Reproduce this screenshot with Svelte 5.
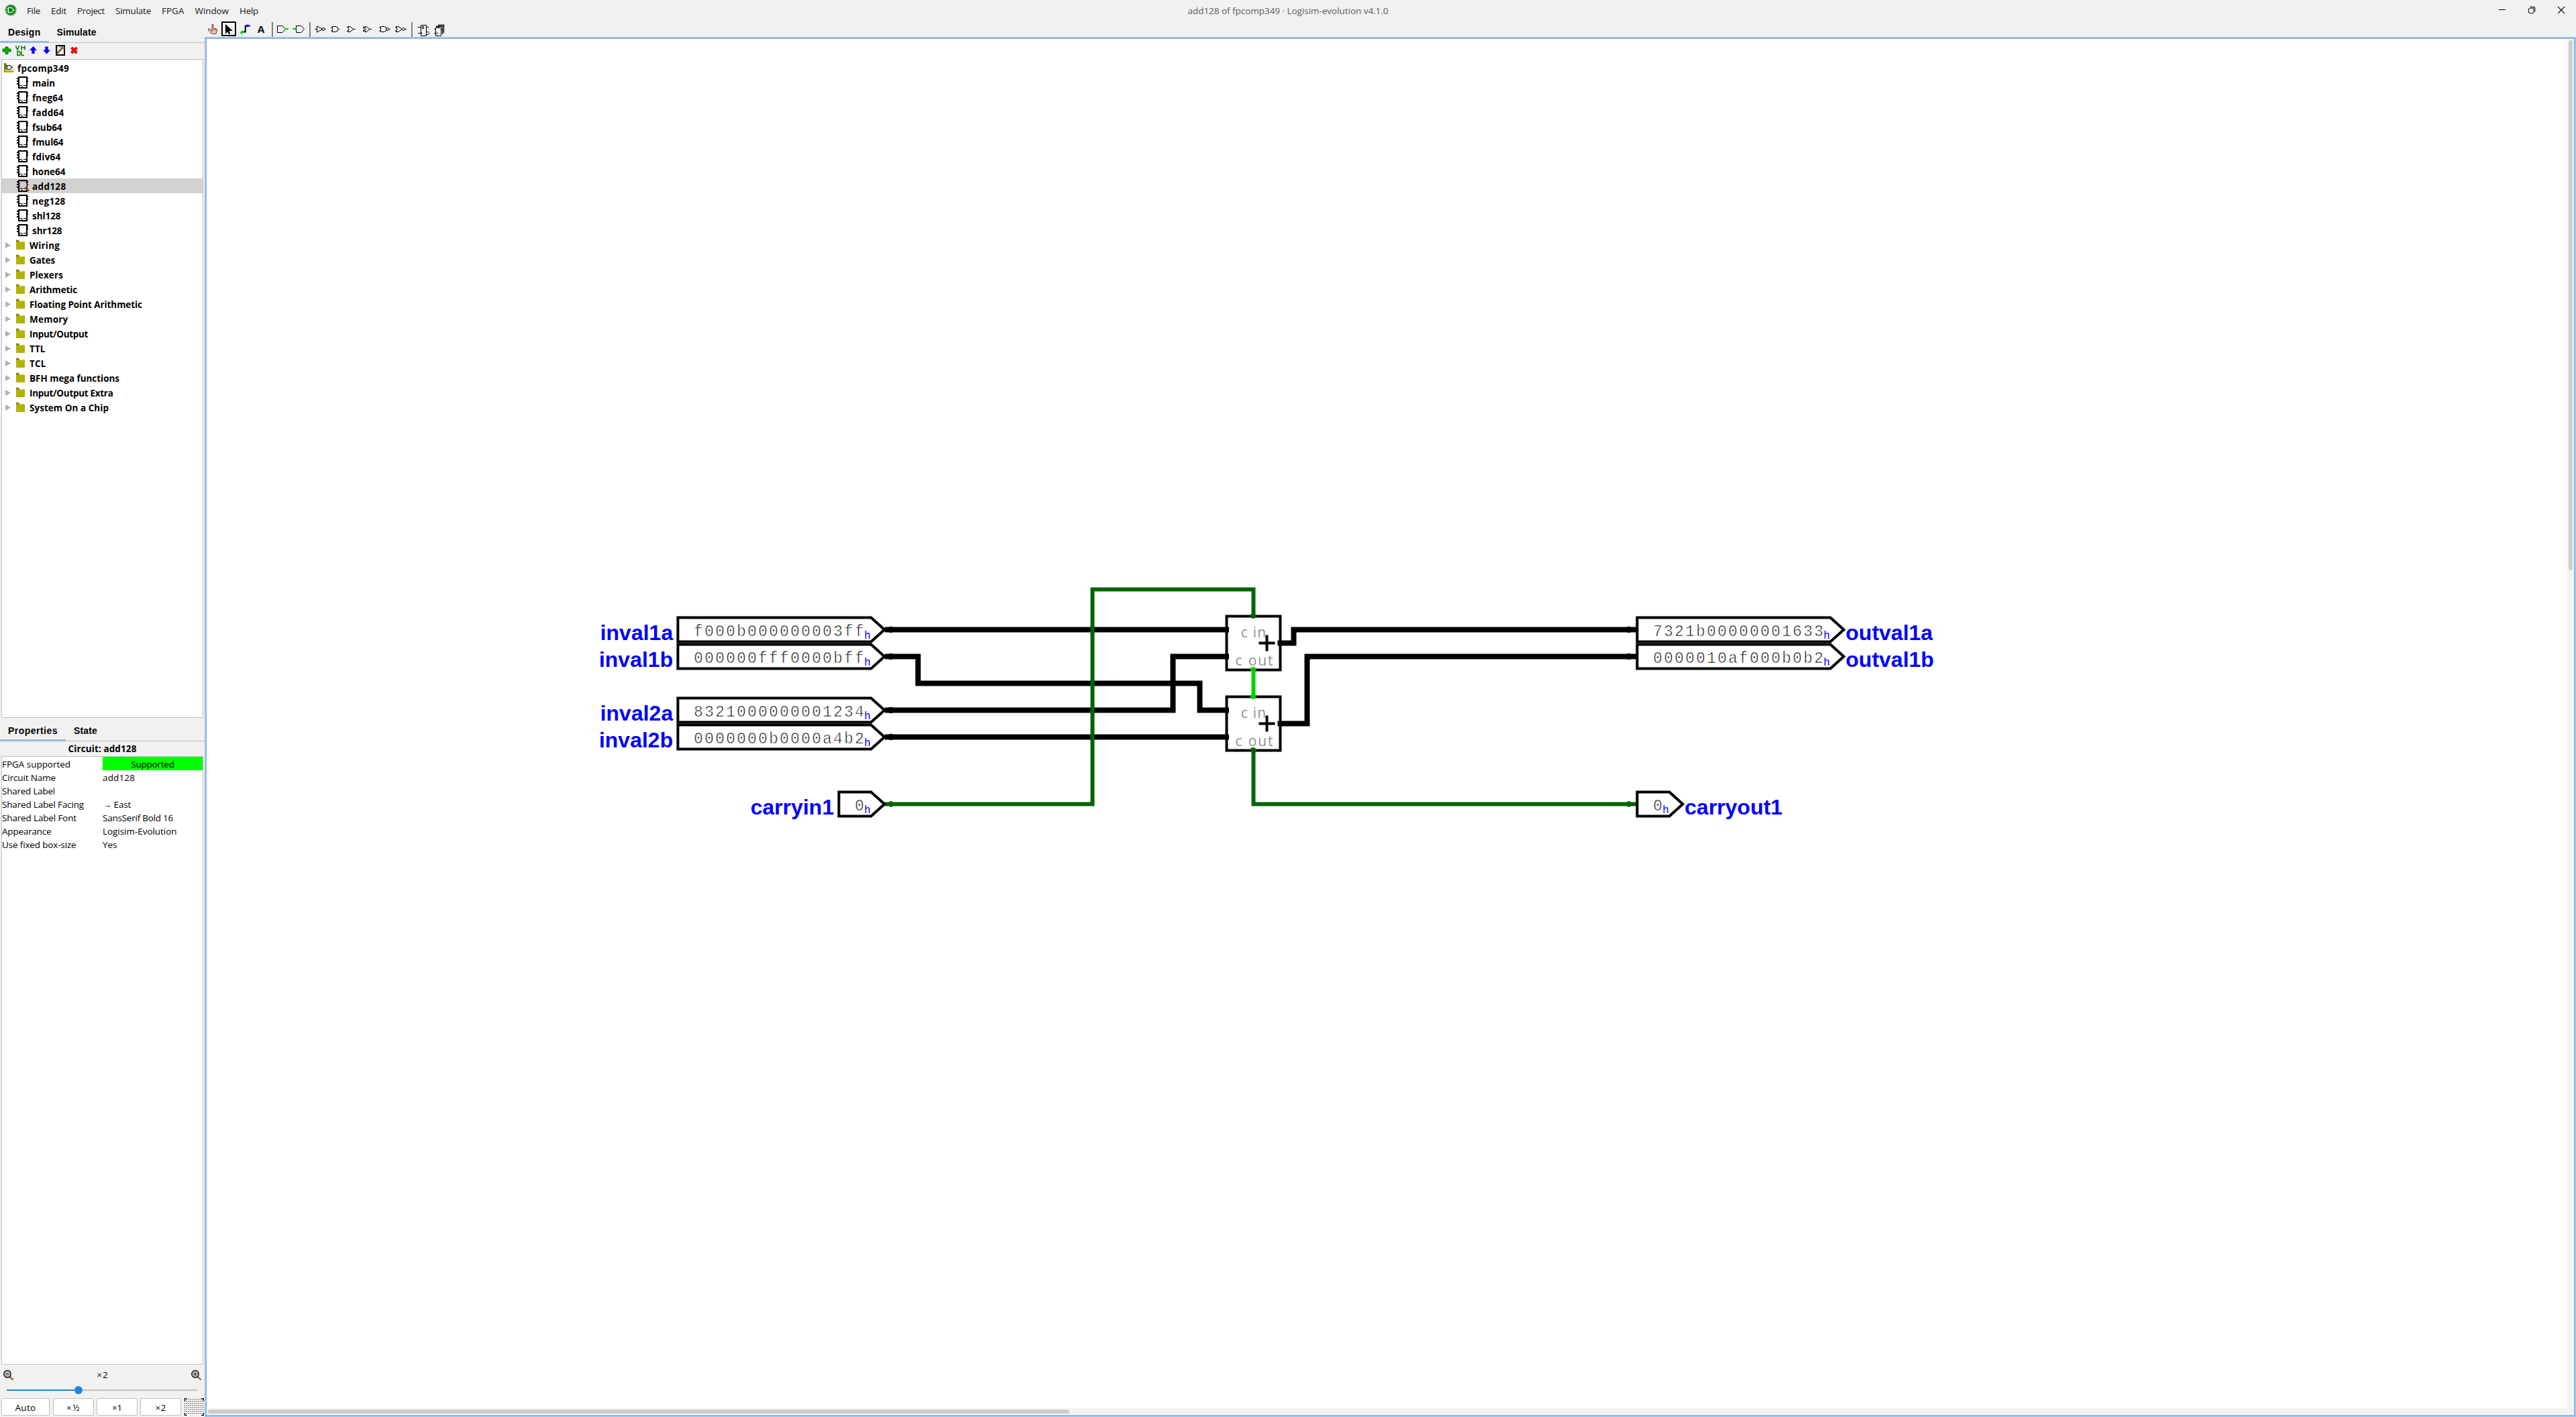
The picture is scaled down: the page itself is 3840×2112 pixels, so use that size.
<script>
  // Spreads a text run over a given width by adjusting its tracking.
  function fit(node, width) {
    const natural = node.getBoundingClientRect().width;
    const count = node.textContent.length;
    if (count > 1) node.style.letterSpacing = `${(width - natural) / count}px`;
  }

  const menus = [['File', 20], ['Edit', 23], ['Project', 41], ['Simulate', 53], ['FPGA', 33.5], ['Window', 50.5], ['Help', 28]];

  const circuits = [
    ['main', 34], ['fneg64', 46], ['fadd64', 47.5], ['fsub64', 44.5], ['fmul64', 46.5], ['fdiv64', 42.5],
    ['hone64', 49.5], ['add128', 50.5], ['neg128', 49.5], ['shl128', 42.5], ['shr128', 44.5]
  ];

  const libraries = [
    ['Wiring', 45], ['Gates', 38], ['Plexers', 50], ['Arithmetic', 71], ['Floating Point Arithmetic', 168],
    ['Memory', 57.5], ['Input/Output', 87], ['TTL', 23.5], ['TCL', 24.5], ['BFH mega functions', 134],
    ['Input/Output Extra', 124.5], ['System On a Chip', 118]
  ];

  const properties = [
    ['FPGA supported', 102, 'Supported', 64.5],
    ['Circuit Name', 80, 'add128', 48],
    ['Shared Label', 79, '', 0],
    ['Shared Label Facing', 122, '→ East', 42],
    ['Shared Label Font', 111, 'SansSerif Bold 16', 105],
    ['Appearance', 73.5, 'Logisim-Evolution', 110.5],
    ['Use fixed box-size', 110.5, 'Yes', 21.5]
  ];

  const pins = [
    { label: 'inval1a', value: 'f000b000000003ff', x: 1010.5, y: 938.5, input: true },
    { label: 'inval1b', value: '000000fff0000bff', x: 1010.5, y: 978.5, input: true },
    { label: 'inval2a', value: '8321000000001234', x: 1010.5, y: 1058.5, input: true },
    { label: 'inval2b', value: '0000000b0000a4b2', x: 1010.5, y: 1098.5, input: true },
    { label: 'carryin1', value: '0', x: 1250.5, y: 1198.5, input: true },
    { label: 'outval1a', value: '7321b00000001633', x: 2440.5, y: 938.5, input: false },
    { label: 'outval1b', value: '0000010af000b0b2', x: 2440.5, y: 978.5, input: false },
    { label: 'carryout1', value: '0', x: 2440.5, y: 1198.5, input: false }
  ];
  const bodyWidth = (pin) => 48 + (pin.value.length - 1) * 16;

  const adders = [918.5, 1038.5];
</script>

{#snippet chip(active)}
  <svg class="chip" width="20" height="20" viewBox="0 0 20 20">
    <path d="M4 3h12v16H4z" fill={active ? '#f4f4f4' : '#fff'} stroke="#000" stroke-width="2" />
    <path d="M1 5h3M1 9h3M1 13h3M16 5h2M16 9h2" stroke="#000" stroke-width="2" />
    <path d="M5 15.5h4M11 15.5h4M8 18l2-2" stroke="#000" stroke-width="1" fill="none" />
    {#if active}
      <circle cx="10.5" cy="9.5" r="5.5" fill="#cdcde0" stroke="#9a5a3c" />
      <path d="M14 13.5l5 5" stroke="#8b4513" stroke-width="2.4" />
    {/if}
  </svg>
{/snippet}

{#snippet magnifier(plus)}
  <svg width="16" height="16" viewBox="0 0 16 16">
    <path d="M9.5 10l5 4.500" stroke="#8b4513" stroke-width="2" />
    <circle cx="6" cy="6" r="5.3" fill="#b4b4b4" stroke="#000" stroke-width="1.2" />
    <path d={plus ? 'M3.5 6h5M6 3.5v5' : 'M3.5 6h5'} stroke="#333" />
  </svg>
{/snippet}

<div class="window">
  <header class="titlebar">
    <div class="menubar">
      <svg class="logo" width="18" height="18" viewBox="0 0 18 18">
        <circle cx="9" cy="9" r="8" fill="#0a8a0a" stroke="#8fa88f" stroke-width="1.4" />
        <path d="M5.5 5.3h3.4a3.7 3.7 0 0 1 0 7.4H5.5z" fill="none" stroke="#e6f2e6" stroke-width="1.3" />
        <path d="M2.5 7.3h3M2.5 10.7h3M12.6 9h3" stroke="#e6f2e6" stroke-width="1.1" />
      </svg>
      {#each menus as [name, width]}
        <span class="menu"><span use:fit={width}>{name}</span></span>
      {/each}
    </div>
    <div class="title"><span use:fit={299}>add128 of fpcomp349 · Logisim-evolution v4.1.0</span></div>
    <div class="controls">
      <svg width="12" height="12" viewBox="0 0 12 12"><path d="M1 5.5h10" stroke="#000" /></svg>
      <svg width="12" height="12" viewBox="0 0 12 12" fill="none" stroke="#111" stroke-width="1.1">
        <rect x="1.5" y="3.3" width="7.4" height="7.4" rx="1.6" />
        <path d="M3.6 1.4h4.6a2.6 2.6 0 0 1 2.6 2.6v4.5" />
      </svg>
      <svg width="12" height="12" viewBox="0 0 12 12"><path d="M1 1l10 10M11 1L1 11" stroke="#111" stroke-width="1.1" /></svg>
    </div>
  </header>

  <div class="workspace">
    <aside class="sidebar">
      <nav class="tabs top">
        <span class="tab active"><span use:fit={48.5}>Design</span></span>
        <span class="tab"><span use:fit={59}>Simulate</span></span>
      </nav>

      <div class="actions">
        <svg width="20" height="24" viewBox="0 64 20 24">
          <path d="M8 70h4v3h4v4h-4v3.500h-4v-3.500h-4v-4h4z" fill="#00b000" stroke="#007800" />
        </svg>
        <svg width="20" height="24" viewBox="20 64 20 24" fill="none" stroke="#008000" stroke-width="1.5">
          <path d="M24 68v2l2 4 2-4v-2M32 68v6.500M37 68v6.500M32 71h5M26 76.500v6h2.500l1.500-1.500v-3l-1.500-1.500zM32 76v6.500h4" />
        </svg>
        <svg width="20" height="24" viewBox="40 64 20 24">
          <path d="M49.500 69l5.500 6h-3.300v5h-4.400v-5H44z" fill="#00f" />
        </svg>
        <svg width="20" height="24" viewBox="60 64 20 24">
          <path d="M69.500 80.500l5.500-6h-3.300v-5h-4.400v5H64z" fill="#00f" />
        </svg>
        <svg width="20" height="24" viewBox="80 64 20 24">
          <rect x="84" y="68" width="12" height="14" fill="#f4f4f4" stroke="#000" stroke-width="2" />
          <path d="M85.500 71v9" stroke="#0b0" stroke-dasharray="1 2" />
          <path d="M95.500 71v9" stroke="#22f" stroke-dasharray="1 2" />
          <path d="M84 81l9-10" stroke="#8b4513" stroke-width="2.500" />
          <path d="M88 69.500l6.500.5v4" fill="none" stroke="#888" stroke-width="2" />
        </svg>
        <svg width="20" height="24" viewBox="100 64 20 24">
          <path d="M106.500 71l8 8M114.500 71l-8 8" stroke="#c00000" stroke-width="4" />
          <path d="M106.500 71l8 8M114.500 71l-8 8" stroke="#ff1414" stroke-width="2.200" />
        </svg>
      </div>

      <div class="tree">
        <div class="row root">
          <svg width="16" height="16" viewBox="0 0 16 16">
            <path d="M0 0h3l1 2v12H0z" fill="#808000" />
            <path d="M4 2h9v10H2z" fill="#f6f6f0" />
            <path d="M13.500 3v8" stroke="#c4c4a0" />
            <path d="M4.500 3.500h3.500a3 3 0 0 1 0 6H4.500zM2 5h2M2 8h2M11 6.500h2" fill="#fff" stroke="#000" />
            <path d="M1 14l1.500-3H15l-1 3z" fill="#b2b200" />
          </svg>
          <span use:fit={77}>fpcomp349</span>
        </div>
        {#each circuits as [name, width]}
          <div class="row circuit" class:selected={name === 'add128'}>
            {@render chip(name === 'add128')}
            <span use:fit={width}>{name}</span>
          </div>
        {/each}
        {#each libraries as [name, width]}
          <div class="row library">
            <svg width="29" height="16" viewBox="8 0 29 16">
              <path d="M8 4v9l8-4.500z" fill="#b0b0b0" />
              <path d="M24 .7h4l1 2v3h-5z" fill="#808000" />
              <path d="M24 3.500h13V15H24z" fill="#b2b200" />
              <path d="M35 2.500h1" stroke="#aaa" />
            </svg>
            <span use:fit={width}>{name}</span>
          </div>
        {/each}
      </div>

      <nav class="tabs bottom">
        <span class="tab active"><span use:fit={74}>Properties</span></span>
        <span class="tab"><span use:fit={35}>State</span></span>
      </nav>
      <div class="caption"><span use:fit={102}>Circuit: add128</span></div>

      <div class="table">
        {#each properties as [name, nameWidth, value, valueWidth]}
          <div class="property">
            <div class="cell"><span use:fit={nameWidth}>{name}</span></div>
            <div class="cell" class:supported={value === 'Supported'}>
              {#if value}<span use:fit={valueWidth}>{value}</span>{/if}
            </div>
          </div>
        {/each}
      </div>

      <div class="zoom">
        {@render magnifier(false)}
        <span use:fit={17}>×2</span>
        {@render magnifier(true)}
      </div>
      <div class="slider">
        <div class="filled"></div>
        <div class="thumb"></div>
        <div class="rest"></div>
      </div>
      <div class="buttons">
        <div class="button auto"><span use:fit={31}>Auto</span></div>
        <div class="button"><span use:fit={21}>×½</span></div>
        <div class="button"><span use:fit={15}>×1</span></div>
        <div class="button"><span use:fit={16}>×2</span></div>
        <svg class="grid" width="30" height="26" viewBox="0 0 30 26">
          <defs>
            <pattern id="dots" width="3" height="3" patternUnits="userSpaceOnUse"><rect x="1" y="1" width="1" height="1" fill="#000" /></pattern>
          </defs>
          <rect x="1" y="1" width="28" height="24" fill="url(#dots)" />
          <path d="M1.500 4V.5H4.500M26 .500h3.500V4M1.500 22v3.500H4.500M26 25.500h3.500V22" fill="none" stroke="#000" stroke-width="1.400" />
        </svg>
      </div>
    </aside>

    <main class="editor">
      <div class="toolbar">
        <svg width="25" height="23" viewBox="305 32 25 23">
          <path d="M316 47V36.500h2V42l5.500 1.500V47l-1.500 3.500h-6.500L310.500 45v-2h2.500l2.500 2.500z" fill="#fbb9a0" stroke="#3a2a24" stroke-width=".8" />
          <path d="M319 42v3M321.500 42.500v3" stroke="#3a2a24" stroke-width=".7" />
        </svg>
        <svg width="22" height="23" viewBox="330 32 22 23">
          <rect x="331" y="33" width="20" height="20" fill="none" stroke="#000" stroke-width="2" />
          <path d="M336 36v14.500l3.200-3 2 3.500 2-.5-1.500-4.500h5.300z" fill="#000" />
        </svg>
        <svg width="24" height="23" viewBox="352 32 24 23">
          <path d="M361.500 47.500h4.300v-9h4" fill="none" stroke="#000" stroke-width="2" />
          <path d="M358 48.500h3M360.500 46v5M361 47.500h2.500" stroke="#00d200" stroke-width="2" />
          <path d="M369 36.500v4M368 38.500h5" stroke="#2020ff" stroke-width="2.400" />
        </svg>
        <span class="text-tool">A</span>
        <svg width="56" height="23" viewBox="402 32 56 23" fill="none" stroke="#000">
          <path d="M406 33v22" stroke="#808080" stroke-width="2" />
          <path d="M413.500 38.500h7.500l4.500 5-4.500 5h-7.500z" />
          <path d="M425 43h5M436 43h5.500" stroke="#00d200" stroke-width="2" />
          <path d="M441.500 38.500h7.500l4.500 5-4.500 5h-7.500z" />
        </svg>
        <svg width="154" height="23" viewBox="458 32 154 23" fill="none" stroke="#000">
          <path d="M462 33v22" stroke="#808080" stroke-width="2" />
          <path d="M469 43.500h3M472.500 39v9l8.500-4.500zM484 43.500h2" />
          <circle cx="482" cy="43.500" r="2" />
          <path d="M493 41h2.500M493 46h2.500M495.500 39.500h4.500a4 4 0 0 1 0 8h-4.500zM504 43.500h2" />
          <path d="M517 41h3M517 46h3M518.500 39.500h3.500l5 4-5 4h-3.500q3-4 0-8zM527 43.500h3" />
          <path d="M541 41h3M541 46h3M541.500 39.500q3 4 0 8M544 39.500h2.500l4.500 4-4.500 4H544q2.500-4 0-8zM551 43.500h3" />
          <path d="M565 41h3M565 46h3M567.500 39.500h4.500a4 4 0 0 1 0 8h-4.500zM580 43.500h2" />
          <circle cx="578" cy="43.500" r="2" />
          <path d="M589 41h3M589 46h3M590.500 39.500h3.500l5 4-5 4h-3.500q3-4 0-8zM603 43.500h3" />
          <circle cx="601.500" cy="43.500" r="2" />
        </svg>
        <svg width="60" height="23" viewBox="612 32 60 23" fill="none" stroke="#000">
          <path d="M614 33v22" stroke="#808080" stroke-width="2" />
          <path d="M627.500 37.500h8v16h-8zM623 40.500h4M623 49.500h6l-1.500-2M636 40.500h3M629.500 39.500h2v3h-2zM636 47.500h2.500l1 1v2l-1 1h-2.500" />
          <path d="M653.500 42v-4.500h9M650.500 42v-2.500h9V51M655 37.500h6.500V49" stroke-width="1.300" />
          <path d="M649.500 41.500h8v12h-8zM647 43.500h2M647 49.500h4M651 47.500l2 2-2 2M657 44.500h2" fill="#fff" />
        </svg>
      </div>

      <div class="frame">
        <svg class="canvas" width="3519" height="2041" viewBox="308 58 3519 2041">
          {#each adders as y}
            <rect class="outline" x="1828.500" {y} width="80" height="80" />
            <text class="port" x="1849.700" y={y + 31} textLength="37.500">c in</text>
            <text class="port" x="1841.500" y={y + 73.500} textLength="56">c out</text>
            <path class="outline" d="M1876.500 {y + 40}h24M1888.500 {y + 28}v24" />
          {/each}

          <g class="bus">
            <path d="M1319 938.500H1832" />
            <path d="M1319 978.500H1368.500V1018.500H1788.500V1058.500H1832" />
            <path d="M1319 1058.500H1748.500V978.500H1832" />
            <path d="M1319 1098.500H1832" />
            <path d="M1904.500 958.500H1928.500V938.500H2440" />
            <path d="M1904.500 1078.500H1948.500V978.500H2440" />
          </g>
          <path class="low" d="M1319 1198.500H1628.500V878.500H1868.500V918" />
          <path class="low" d="M1868.500 1118V1198.500H2440" />
          <path class="high" d="M1868.500 998V1038" />
          <g fill="#006400">
            <circle cx="1868" cy="918" r="4" />
            <circle cx="1868" cy="1118" r="4" />
            <circle cx="1328" cy="1198.500" r="4.200" />
            <circle cx="2428" cy="1198.500" r="4.200" />
          </g>
          <g fill="#00d200">
            <circle cx="1868" cy="998" r="4" />
            <circle cx="1868" cy="1038" r="4" />
          </g>

          {#each pins as pin}
            {@const w = bodyWidth(pin)}
            {#if pin.value.length > 1}
              <ellipse cx={pin.input ? 1328 : 2428} cy={pin.y} rx="5" ry="4.700" />
            {/if}
            <path class="outline" fill="#fff" d="M{pin.x} {pin.y - 18}h{w}l20 18l-20 18h-{w}z" />
            <text class="value" x={pin.x + 23.800} y={pin.y + 9.900}>{pin.value}</text>
            <text class="radix" x={pin.x + w - 10.200} y={pin.y + 13.500}>h</text>
            {#if pin.input}
              <text class="label" text-anchor="end" x={pin.x - 7.300} y={pin.y + 15.500}>{pin.label}</text>
            {:else}
              <text class="label" x={pin.x + w + 22.800} y={pin.y + 15.500}>{pin.label}</text>
            {/if}
          {/each}
        </svg>
        <div class="vertical-track"><div class="vertical-thumb"></div></div>
        <div class="horizontal-track"><div class="horizontal-thumb"></div></div>
      </div>
    </main>
  </div>
</div>

<style>
  :global(body) {
    margin: 0;
    background: #f1f1f1;
  }

  .window {
    box-sizing: border-box;
    width: 3840px;
    height: 2112px;
    overflow: hidden;
    display: flex;
    flex-direction: column;
    background: #f1f1f1;
    color: #000;
    font-family: "Open Sans", "Noto Sans", sans-serif;
    font-size: 13.5px;
  }

  .window * {
    box-sizing: border-box;
  }

  svg {
    display: block;
    flex: none;
  }

  span {
    display: inline-block;
    white-space: pre;
  }

  .titlebar {
    height: 32px;
    display: grid;
    grid-template-columns: 1fr auto 1fr;
    line-height: 32px;
  }

  .menubar {
    display: flex;
    align-items: center;
    padding-left: 7px;
  }

  .logo {
    margin: -2px 15px 0 0;
  }

  .menu {
    margin-right: 16px;
    color: #1a1a1a;
  }

  .title {
    color: #5c5c5c;
  }

  .controls {
    display: flex;
    justify-content: flex-end;
    gap: 32px;
    padding: 9px 16px 0 0;
  }

  .workspace {
    flex: 1;
    display: flex;
    min-height: 0;
  }

  .sidebar {
    width: 305px;
    display: flex;
    flex-direction: column;
  }

  .tabs {
    display: flex;
    flex: none;
    font: bold 14px "Liberation Sans", Arial, sans-serif;
    box-shadow: inset 0 -1px #c0c0c0;
  }

  .tab {
    padding: 0 12px;
  }

  .tab.active {
    border-bottom: 3px solid #98b9dc;
  }

  .tabs.top {
    height: 32px;
    line-height: 32px;
  }

  .tabs.bottom {
    height: 35px;
    line-height: 38px;
  }

  .actions {
    display: flex;
    height: 24px;
  }

  .tree,
  .table {
    width: 301px;
    margin-left: 2px;
    border: 1px solid #c0c0c0;
    background: #fff;
  }

  .tree {
    height: 982px;
    padding-top: 1px;
  }

  .row {
    display: flex;
    height: 22px;
    line-height: 25px;
    font-weight: bold;
  }

  .root {
    padding-left: 3px;
  }

  .root svg {
    margin: 4px 4px 0 0;
  }

  .circuit {
    padding-left: 21px;
  }

  .circuit svg {
    margin: 0 4px 0 0;
  }

  .library {
    padding-left: 5px;
  }

  .library svg {
    margin: 3px 7px 0 0;
  }

  .selected {
    background: #d2d2d2;
  }

  .caption {
    height: 22px;
    line-height: 22px;
    font-weight: bold;
    text-align: center;
  }

  .table {
    height: 907px;
  }

  .property {
    display: grid;
    grid-template-columns: 150px 149px;
    height: 20px;
    line-height: 22px;
  }

  .supported {
    height: 20px;
    background: #00ff00;
    text-align: center;
  }

  .zoom {
    height: 26px;
    display: flex;
    justify-content: space-between;
    padding: 8px 4px 0 5px;
    line-height: 15px;
  }

  .slider {
    height: 24px;
    display: flex;
    align-items: center;
    padding: 0 10px;
  }

  .filled {
    width: 101px;
    height: 2px;
    background: #2285e0;
  }

  .thumb {
    width: 12px;
    height: 12px;
    border-radius: 50%;
    background: #2285e0;
  }

  .rest {
    flex: 1;
    height: 2px;
    background: #c2c2c2;
  }

  .buttons {
    display: flex;
    gap: 4px;
    padding-left: 2px;
    height: 26px;
  }

  .button {
    width: 61px;
    border: 1px solid #c0c0c0;
    border-radius: 2px;
    background: #fff;
    text-align: center;
    line-height: 27px;
  }

  .auto {
    width: 72px;
    margin-right: 1px;
  }

  .editor {
    flex: 1;
    display: flex;
    flex-direction: column;
  }

  .toolbar {
    height: 23px;
    display: flex;
  }

  .text-tool {
    width: 26px;
    text-align: center;
    font: bold 15.5px/24px "Liberation Sans", Arial, sans-serif;
  }

  .frame {
    flex: 1;
    display: grid;
    grid-template-columns: 3519px 10px;
    grid-template-rows: 2041px 10px;
    padding: 3px;
    background: #f3f3f3;
    box-shadow: inset 0 0 0 2px #99c4ed, inset 0 0 0 3px #86acd2;
  }

  .canvas {
    background: #fff;
  }

  .vertical-track {
    padding: 2px;
  }

  .vertical-thumb {
    width: 6px;
    height: 790px;
    border-radius: 3px;
    background: #cdcdcd;
  }

  .horizontal-track {
    padding: 2px;
  }

  .horizontal-thumb {
    width: 1284px;
    height: 6px;
    border-radius: 3px;
    background: #cdcdcd;
  }

  .outline {
    stroke: #000;
    stroke-width: 4;
  }

  rect.outline {
    fill: none;
  }

  .bus path {
    fill: none;
    stroke: #000;
    stroke-width: 8;
  }

  .low {
    fill: none;
    stroke: #006400;
    stroke-width: 6;
  }

  .high {
    stroke: #00d200;
    stroke-width: 6;
  }

  .port {
    font-size: 21px;
    fill: #909090;
  }

  .value {
    font-family: "Liberation Mono", "Courier New", monospace;
    font-size: 23px;
    letter-spacing: 2.2px;
    fill: #101010;
    stroke: #fff;
    stroke-width: 0.6px;
  }

  .radix {
    font-family: "Liberation Mono", "Courier New", monospace;
    font-size: 16px;
    fill: #0000ff;
  }

  .label {
    font: bold 32px "Liberation Sans", Arial, sans-serif;
    fill: #0000ff;
  }
</style>
